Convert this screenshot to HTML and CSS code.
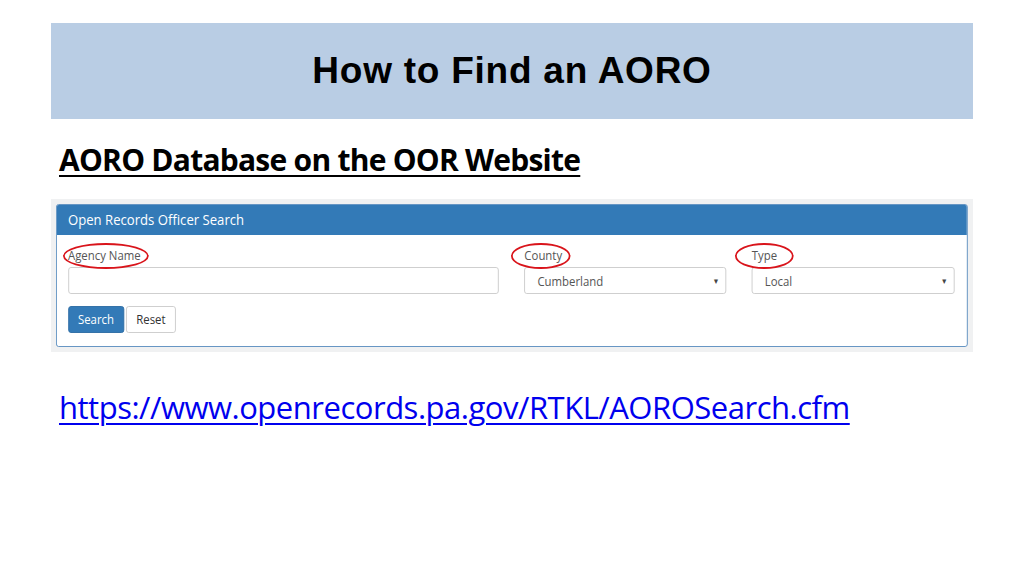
FILE: index.html
```html
<!DOCTYPE html>
<html>
<head>
<meta charset="utf-8">
<link rel="stylesheet" href="styles.css">
</head>
<body>
<div class="slide">
  <header class="banner"><h1>How to Find an AORO</h1></header>
  <h2 class="subtitle">AORO Database on the OOR Website</h2>
  <div class="shot">
    <div class="panel">
      <div class="panel-head">Open Records Officer Search</div>
      <div class="panel-body">
        <div class="fields">
          <div class="field">
            <label class="lbl">Agency Name<span class="ring ring-agency"></span></label>
            <div class="input"></div>
          </div>
          <div class="field">
            <label class="lbl">County<span class="ring ring-county"></span></label>
            <div class="input select"><span>Cumberland</span><span class="caret">▼</span></div>
          </div>
          <div class="field">
            <label class="lbl">Type<span class="ring ring-type"></span></label>
            <div class="input select"><span>Local</span><span class="caret">▼</span></div>
          </div>
        </div>
        <div class="buttons">
          <span class="btn btn-primary">Search</span>
          <span class="btn btn-default">Reset</span>
        </div>
      </div>
    </div>
  </div>
  <p class="url"><a href="#">https://www.openrecords.pa.gov/RTKL/AOROSearch.cfm</a></p>
</div>
</body>
</html>
```
FILE: styles.css
```css
html, body {
  margin: 0;
  padding: 0;
  background: #ffffff;
}
.slide {
  width: 1024px;
  height: 576px;
  overflow: hidden;
  padding-top: 23px;
  box-sizing: border-box;
}
.banner {
  margin-left: 51px;
  width: 922px;
  height: 96px;
  background: #b9cde4;
  display: flex;
  align-items: center;
  justify-content: center;
}
.banner h1 {
  margin: 0;
  font-family: "Liberation Sans", Arial, sans-serif;
  font-weight: bold;
  font-size: 37px;
  line-height: 44px;
  letter-spacing: 0.75px;
  color: #000;
  padding-bottom: 1px;
}
.subtitle {
  margin: 23px 0 0 59px;
  font-family: "Open Sans", sans-serif;
  font-weight: bold;
  font-size: 30px;
  line-height: 36px;
  letter-spacing: -0.75px;
  text-decoration: underline;
  text-decoration-thickness: 2px;
  text-underline-offset: 4px;
  color: #000;
}
.shot {
  margin: 21px 0 0 51px;
  width: 922px;
  height: 153px;
  box-sizing: border-box;
  background: #f0f1f2;
  padding: 5px;
  overflow: hidden;
}
/* the embedded web screenshot is squeezed horizontally */
.panel {
  width: 1042.3px;
  height: 143px;
  box-sizing: border-box;
  border: 1px solid #5d8fc0;
  border-radius: 3px;
  background: #fff;
  font-family: "Open Sans", sans-serif;
  transform: scaleX(0.875);
  transform-origin: 0 0;
  overflow: hidden;
}
.panel-head {
  height: 30px;
  background: #337ab7;
  color: #fff;
  font-size: 15px;
  line-height: 29px;
  padding-left: 12.7px;
}
.panel-body {
  padding: 11px 0 0 12.7px;
}
.fields {
  display: grid;
  grid-template-columns: 492.5px 230.8px 232px;
  column-gap: 29.1px;
}
.field {
  display: flex;
  flex-direction: column;
}
.lbl {
  position: relative;
  font-size: 13px;
  line-height: 18px;
  color: #555;
  margin-bottom: 3px;
  align-self: flex-start;
}
.ring {
  position: absolute;
  top: -3px;
  height: 26px;
  border: 2px solid #d9141b;
  border-radius: 50%;
  box-sizing: border-box;
  z-index: 1;
}
.ring-agency { left: -5.7px; width: 98.3px; }
.ring-county { left: -14.9px; width: 67.4px; }
.ring-type { left: -18.9px; width: 66.3px; }
.input {
  height: 27px;
  box-sizing: border-box;
  border: 1px solid #ccc;
  border-radius: 3px;
  background: #fff;
}
.select {
  display: flex;
  align-items: center;
  justify-content: space-between;
  padding: 0 7px 0 13.9px;
  font-size: 13px;
  color: #555;
}
.caret {
  font-size: 8px;
  color: #444;
}
.buttons {
  display: flex;
  gap: 2.3px;
  margin-top: 12px;
}
.btn {
  height: 27px;
  box-sizing: border-box;
  border-radius: 3px;
  font-size: 13px;
  line-height: 25px;
  border: 1px solid;
  text-align: center;
}
.btn-primary {
  background: #337ab7;
  border-color: #2e6da4;
  color: #fff;
  width: 64px;
}
.btn-default {
  background: #fff;
  border-color: #ccc;
  color: #333;
  width: 57px;
}
.url {
  margin: 35px 0 0 59px;
  font-family: "Open Sans", sans-serif;
  font-size: 31px;
  letter-spacing: -0.48px;
  line-height: 40px;
}
.url a {
  color: #0000ee;
  text-decoration: underline;
  text-decoration-thickness: 1.5px;
  text-underline-offset: 4px;
}
```
